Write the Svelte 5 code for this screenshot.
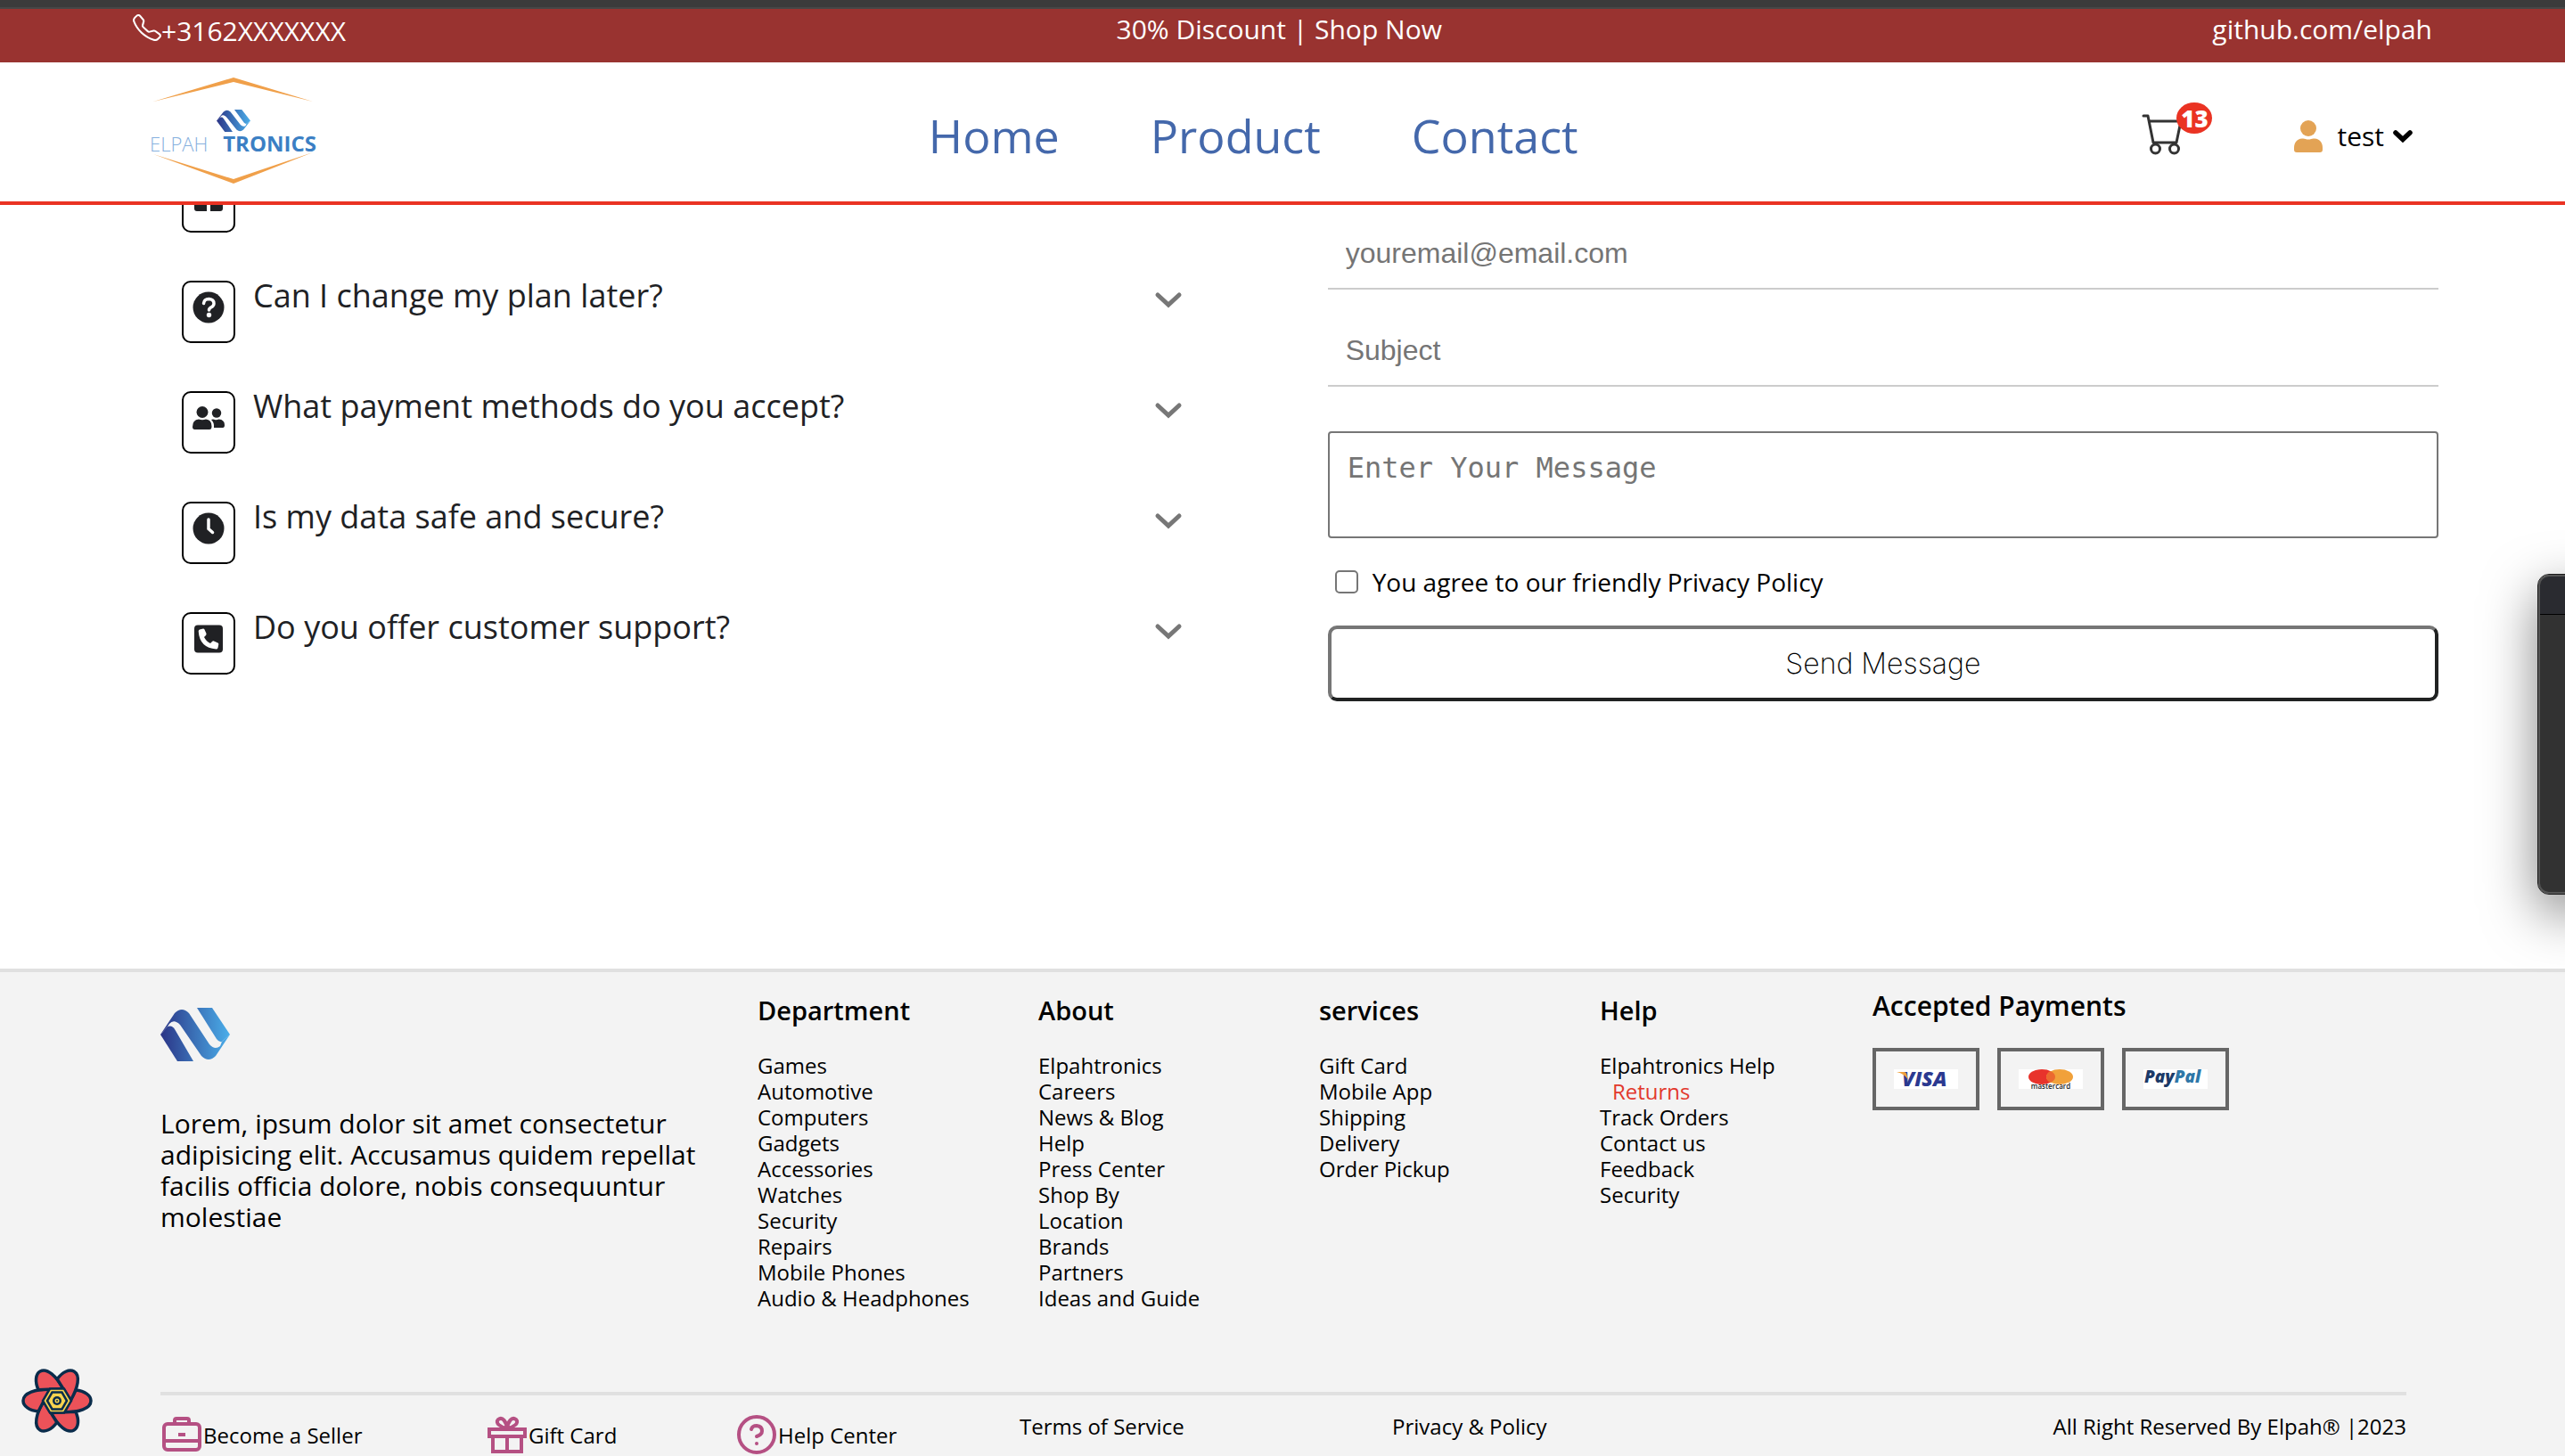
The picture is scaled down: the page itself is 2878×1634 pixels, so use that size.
<script lang="ts">
  const navLinks = ['Home', 'Product', 'Contact'];

  const faqs = [
    { icon: 'gift', question: '' },
    { icon: 'question', question: 'Can I change my plan later?' },
    { icon: 'users', question: 'What payment methods do you accept?' },
    { icon: 'clock', question: 'Is my data safe and secure?' },
    { icon: 'phone', question: 'Do you offer customer support?' },
  ];

  const columns = [
    {
      title: 'Department',
      links: ['Games', 'Automotive', 'Computers', 'Gadgets', 'Accessories', 'Watches', 'Security', 'Repairs', 'Mobile Phones', 'Audio & Headphones'],
    },
    {
      title: 'About',
      links: ['Elpahtronics', 'Careers', 'News & Blog', 'Help', 'Press Center', 'Shop By', 'Location', 'Brands', 'Partners', 'Ideas and Guide'],
    },
    { title: 'services', links: ['Gift Card', 'Mobile App', 'Shipping', 'Delivery', 'Order Pickup'] },
    { title: 'Help', links: ['Elpahtronics Help', 'Returns', 'Track Orders', 'Contact us', 'Feedback', 'Security'] },
  ];

  const petals = [0, 60, 120, 180, 240, 300];
</script>

{#snippet mark(id: string)}
  <defs>
    <linearGradient id={id} x1="0" y1="0" x2="78" y2="0" gradientUnits="userSpaceOnUse">
      <stop offset="0" stop-color="#2b3486" />
      <stop offset="0.5" stop-color="#3b72b8" />
      <stop offset="1" stop-color="#4aaeea" />
    </linearGradient>
  </defs>
  <g fill="url(#{id})">
    <path d="M8 21L0 30L19 60H37L16 24Q13 19 8 21Z" />
    <path d="M0 30L16 6Q24-2 32 6L55 41Q61 48 67 43L69 38L78 30L62 54Q54 62 46 54L22 19Q15 12 10 18L8 21Z" />
    <path d="M41 0H58L78 30L69 38Q66 39 63 35Z" />
  </g>
{/snippet}

<div class="page">
  <div class="window-edge"></div>

  <div class="topbar">
    <a class="phone" href="tel:+3162">
      <svg width="32" height="30" viewBox="0 0 16 16" preserveAspectRatio="none" fill="currentColor" aria-hidden="true">
        <path d="M3.654 1.328a.678.678 0 0 0-1.015-.063L1.605 2.3c-.483.484-.661 1.169-.45 1.77a17.568 17.568 0 0 0 4.168 6.608 17.569 17.569 0 0 0 6.608 4.168c.601.211 1.286.033 1.77-.45l1.034-1.034a.678.678 0 0 0-.063-1.015l-2.307-1.794a.678.678 0 0 0-.58-.122l-2.19.547a1.745 1.745 0 0 1-1.657-.459L5.482 8.062a1.745 1.745 0 0 1-.46-1.657l.548-2.19a.678.678 0 0 0-.122-.58L3.654 1.328zM1.884.511a1.745 1.745 0 0 1 2.612.163L6.29 2.98c.329.423.445.974.315 1.494l-.547 2.19a.678.678 0 0 0 .178.643l2.457 2.457a.678.678 0 0 0 .644.178l2.189-.547a1.745 1.745 0 0 1 1.494.315l2.306 1.794c.829.645.905 1.87.163 2.611l-1.034 1.034c-.74.74-1.846 1.065-2.877.702a18.634 18.634 0 0 1-7.01-4.42 18.634 18.634 0 0 1-4.42-7.009c-.362-1.03-.037-2.137.703-2.877L1.885.511z" />
      </svg>
      <span>+3162XXXXXXX</span>
    </a>
    <span>30% Discount | Shop Now</span>
    <a href="https://github.com/elpah">github.com/elpah</a>
  </div>

  <header>
    <a class="brand" href="#home" aria-label="Elpah Tronics">
      <svg width="190" height="120" viewBox="0 0 190 120" aria-hidden="true">
        <path d="M4 27L94 0L183 27L94 5Z" fill="#f0a04a" />
        <path d="M4 86L94 119L183 84L94 114Z" fill="#f0a04a" />
        <svg x="75" y="36" width="38" height="25" viewBox="0 0 78 60" preserveAspectRatio="none">{@render mark('mark-small')}</svg>
        <text class="brand-light" x="0" y="83">ELPAH</text>
        <text class="brand-bold" x="187" y="83" text-anchor="end">TRONICS</text>
      </svg>
    </a>

    <nav>
      {#each navLinks as link}
        <a href="#{link.toLowerCase()}">{link}</a>
      {/each}
    </nav>

    <div class="actions">
      <a class="cart" href="#cart" aria-label="Cart, 13 items">
        <svg width="44" height="46" viewBox="0 0 44 46" fill="none" stroke="#333" stroke-width="3" stroke-linecap="round" stroke-linejoin="round" aria-hidden="true">
          <path d="M1 2H6L12 32H38L43 8H8" />
          <circle cx="14.500" cy="39" r="5" />
          <circle cx="35.500" cy="39" r="5" />
        </svg>
        <span class="badge">13</span>
      </a>
      <button class="user" type="button">
        <svg width="32" height="36" viewBox="0 0 32 36" fill="#e3a355" aria-hidden="true">
          <circle cx="16" cy="9" r="9" />
          <path d="M9 20.500C12 20 13 21.500 16 21.500S20 20 23 20.500C29 21 32 25 32 31V33Q32 36 29 36H3Q0 36 0 33V31C0 25 3 21 9 20.500Z" />
        </svg>
        <span>test</span>
        <svg width="22" height="15" viewBox="0 0 22 15" fill="none" stroke="#000" stroke-width="5.500" stroke-linecap="round" aria-hidden="true">
          <path d="M3 3L11 10.500L19 3" />
        </svg>
      </button>
    </div>
  </header>

  <main>
    <section class="faq">
      {#each faqs as faq}
        <button class="faq-row" type="button" aria-label={faq.question || 'Question'}>
          <span class="faq-icon">
            <svg width="36" height="36" viewBox="0 0 36 36" fill="#202124" aria-hidden="true">
              {#if faq.icon === 'gift'}
                <path d="M2 20H16V34H5Q2 34 2 31ZM20 20H34V31Q34 34 31 34H20Z" />
              {:else if faq.icon === 'question'}
                <circle cx="18" cy="18" r="17.500" />
                <path d="M12.500 13.500Q13 8.500 18.500 8.500Q24 9 24 13.500Q24 16 21.500 17.500Q18.500 19 18.500 21" fill="none" stroke="#fff" stroke-width="3.500" stroke-linecap="round" />
                <circle cx="18.500" cy="26.500" r="2.700" fill="#fff" />
              {:else if faq.icon === 'users'}
                <circle cx="11" cy="11.500" r="6.500" />
                <circle cx="27" cy="12.500" r="5.200" />
                <path d="M7 19.500Q11 21 15 19.500Q21.500 20 21.500 27.500Q21.500 31 19 31H2.500Q0 31 0 28Q0 20 7 19.500Z" />
                <path d="M21 20Q23 19 25 20Q27 20.700 29.500 19.500Q36 20 36 26Q36 29 34 29H24Q24.500 23 21 20Z" />
              {:else if faq.icon === 'clock'}
                <circle cx="18" cy="18" r="17.500" />
                <path d="M18 8V18.500L22.500 22.500" fill="none" stroke="#fff" stroke-width="3.500" stroke-linecap="round" />
              {:else}
                <rect x="2" y="2.500" width="32" height="31" rx="4" />
                <path d="M8 7.500L12 6.500Q13 6.500 13.500 7.500L15.500 12Q15.700 13 15 14L13 16Q15.500 21 20 23L22 21Q23 20 24 20.500L28.500 22.500Q29.500 23 29.300 24L28.500 28Q28 29.500 26.500 29.500Q8 28 6.700 9.500Q6.700 8 8 7.500Z" fill="#fff" />
              {/if}
            </svg>
          </span>
          <span class="faq-text">{faq.question}</span>
          {#if faq.question}
            <svg width="30" height="44" viewBox="0 0 30 44" fill="none" stroke="#777" stroke-width="5" stroke-linecap="round" aria-hidden="true">
              <path d="M3 16L15 27L27 16" />
            </svg>
          {/if}
        </button>
      {/each}
    </section>

    <form onsubmit={(event) => event.preventDefault()}>
      <input type="email" placeholder="youremail@email.com" aria-label="Email" />
      <input type="text" placeholder="Subject" aria-label="Subject" />
      <textarea placeholder="Enter Your Message" aria-label="Message"></textarea>
      <div class="agree">
        <input type="checkbox" id="agree" />
        <label for="agree">You agree to our friendly Privacy Policy</label>
      </div>
      <button class="send" type="submit">Send Message</button>
    </form>
  </main>

  <footer>
    <div class="footer-grid">
      <div class="about">
        <svg width="78" height="60" viewBox="0 0 78 60" aria-hidden="true">{@render mark('mark-large')}</svg>
        <p>Lorem, ipsum dolor sit amet consectetur adipisicing elit. Accusamus quidem repellat facilis officia dolore, nobis consequuntur molestiae</p>
      </div>
      {#each columns as column}
        <div class="column">
          <h2>{column.title}</h2>
          <ul>
            {#each column.links as link}
              <li><a class:active={link === 'Returns'} href="#footer">{link}</a></li>
            {/each}
          </ul>
        </div>
      {/each}
      <div class="payments">
        <h2>Accepted Payments</h2>
        <div class="cards">
          <span class="card">
            <svg width="72" height="22" viewBox="0 0 72 22" role="img" aria-label="Visa">
              <rect width="72" height="22" fill="#fff" />
              <text class="pay visa" x="9" y="19">VISA</text>
              <path d="M3 3H11Q14 3 14.500 6L16 12Q12 5 3 3Z" fill="#f0a13c" />
            </svg>
          </span>
          <span class="card">
            <svg width="72" height="22" viewBox="0 0 72 22" role="img" aria-label="Mastercard">
              <rect width="72" height="22" fill="#fff" />
              <ellipse cx="26" cy="8.500" rx="15" ry="8.500" fill="#e8332b" />
              <ellipse cx="46" cy="8.500" rx="15" ry="8.500" fill="#f1a13a" />
              <path d="M36 2.200Q41 4.500 41 8.500T36 14.800Q31 12.500 31 8.500T36 2.200Z" fill="#ec692f" />
              <text class="pay master" x="36" y="22" text-anchor="middle">mastercard</text>
            </svg>
          </span>
          <span class="card">
            <svg width="72" height="22" viewBox="0 0 72 22" role="img" aria-label="PayPal">
              <rect width="72" height="22" fill="#fff" />
              <text class="pay" x="1" y="15"><tspan fill="#1d3a68">Pay</tspan><tspan fill="#2f77a8">Pal</tspan></text>
            </svg>
          </span>
        </div>
      </div>
    </div>

    <div class="bottom">
      <a class="with-icon seller" href="#seller">
        <svg width="48" height="44" viewBox="0 0 48 44" fill="none" stroke="#b55083" stroke-width="4" aria-hidden="true">
          <rect x="4" y="10" width="40" height="29" rx="4" />
          <path d="M16 9V6Q16 4 18 4H30Q32 4 32 6V9M4 29H44" />
          <rect x="20" y="20" width="8" height="4" fill="#b55083" stroke="none" />
        </svg>
        <span>Become a Seller</span>
      </a>
      <a class="with-icon gift" href="#gift">
        <svg width="48" height="44" viewBox="0 0 48 44" fill="none" stroke="#b55083" stroke-width="4" aria-hidden="true">
          <rect x="4" y="16" width="40" height="8" />
          <path d="M8 24V41H40V24M24 24V41" />
          <path d="M24 15C17 14 10 9 14 5C19 1 23 8 24 15C25 8 29 1 34 5C38 9 31 14 24 15Z" />
        </svg>
        <span>Gift Card</span>
      </a>
      <a class="with-icon help" href="#help">
        <svg width="48" height="44" viewBox="0 0 48 44" fill="none" stroke="#b55083" stroke-width="4" stroke-linecap="round" aria-hidden="true">
          <circle cx="24" cy="22" r="20" />
          <path d="M18 16Q19 12 24 12Q30 12.500 30 18Q30 22 24 24" />
          <circle cx="24" cy="32" r="2" fill="#b55083" stroke="none" />
        </svg>
        <span>Help Center</span>
      </a>
      <a class="terms" href="#terms">Terms of Service</a>
      <a class="privacy" href="#privacy">Privacy &amp; Policy</a>
      <span class="rights">All Right Reserved By Elpah® |2023</span>
    </div>
  </footer>

  <button class="devtools" type="button" aria-label="Open query devtools">
    <svg width="80" height="72" viewBox="-40 -36 80 72" aria-hidden="true">
      <g fill="#ec5259" stroke="#0a2c4b" stroke-width="3.500" stroke-linejoin="round">
        {#each petals as angle}
          <path transform="rotate({angle})" d="M8 13L21-12C31-11 38-6 38 0C38 9 24 13 8 13Z" />
        {/each}
      </g>
      <path d="M-8-13.500H8L16 0L8 13.500H-8L-16 0Z" fill="#f8d44f" stroke="#0a2c4b" stroke-width="2.500" />
      <path d="M-5.500-9.500H5.500L11 0L5.500 9.500H-5.500L-11 0Z" fill="#f8d44f" stroke="#0a2c4b" stroke-width="2.500" />
      <ellipse rx="5" ry="5" fill="#0a2c4b" />
      <circle r="2.500" fill="#f8d44f" />
      <circle r="1" fill="#0a2c4b" />
    </svg>
  </button>

  <div class="side-window"></div>
</div>

<style>
  :global(body) {
    background: #fff;
  }

  .page {
    position: relative;
    overflow: hidden;
    height: 100vh;
    color: #000;
    font-family: 'Open Sans', 'Noto Sans', sans-serif;
  }

  a {
    color: inherit;
    text-decoration: none;
  }

  button {
    font-family: inherit;
    background: none;
    border: 0;
    padding: 0;
    color: inherit;
    text-align: left;
  }

  svg {
    display: block;
    flex: none;
    overflow: visible;
  }

  .window-edge {
    height: 8px;
    background: #3b3b3b;
    border-bottom: 2px solid #474747;
  }

  .topbar {
    display: flex;
    justify-content: space-between;
    align-items: flex-start;
    height: 60px;
    box-sizing: border-box;
    padding: 4px 149px 0;
    background: #993330;
    color: #fff;
    font-size: 30px;
    line-height: 38px;
  }

  .phone {
    display: flex;
    line-height: 42px;
  }

  .phone svg {
    margin-top: 2px;
  }

  header {
    display: flex;
    justify-content: space-between;
    align-items: center;
    height: 156px;
    padding: 0 171px 0 168px;
    border-bottom: 4px solid #ea3323;
  }

  .brand {
    width: 240px;
    padding-bottom: 2px;
  }

  .brand-light {
    font-size: 22px;
    font-weight: 300;
    fill: #86b0de;
  }

  .brand-bold {
    font-size: 24px;
    font-weight: 700;
    fill: #3b7fc4;
  }

  nav {
    display: flex;
    gap: 102px;
    padding-top: 8px;
    font-size: 52px;
    line-height: 60px;
    color: #4468ab;
  }

  .actions {
    display: flex;
    align-items: center;
    gap: 126px;
    padding-top: 10px;
  }

  .cart {
    position: relative;
    margin-bottom: 4px;
  }

  .badge {
    position: absolute;
    left: 38px;
    top: -13px;
    width: 40px;
    height: 35px;
    border-radius: 50%;
    background: #ea3323;
    color: #fff;
    font-size: 26px;
    font-weight: 800;
    line-height: 36px;
    text-align: center;
  }

  .user {
    display: flex;
    align-items: center;
    gap: 10px;
    font-size: 30px;
    line-height: 38px;
  }

  .user span {
    padding-left: 6px;
  }

  main {
    display: grid;
    grid-template-columns: 9fr 10fr;
    gap: 164px;
    overflow: hidden;
    padding: 0 142px 300px 204px;
  }

  .faq {
    display: flex;
    flex-direction: column;
    gap: 54px;
    margin-top: -39px;
  }

  .faq-row {
    display: flex;
    align-items: flex-start;
    height: 70px;
    color: #202124;
  }

  .faq-icon {
    box-sizing: border-box;
    width: 60px;
    height: 70px;
    padding: 10px;
    border: 2px solid #000;
    border-radius: 10px;
  }

  .faq-text {
    flex: 1;
    padding-left: 20px;
    font-size: 36px;
    line-height: 34px;
  }

  form {
    display: flex;
    flex-direction: column;
    padding-top: 16px;
  }

  input[type='email'],
  input[type='text'] {
    box-sizing: border-box;
    height: 79px;
    margin: 0 0 30px;
    padding: 20px;
    border: 0;
    border-bottom: 2px solid #ccc;
    outline: 0;
    font-family: 'Liberation Sans', Arial, sans-serif;
    font-size: 32px;
    line-height: 37px;
  }

  input::placeholder,
  textarea::placeholder {
    color: #757575;
  }

  textarea {
    box-sizing: border-box;
    height: 120px;
    margin-top: 20px;
    padding: 20px;
    border: 2px solid #767676;
    border-radius: 4px;
    font-family: 'DejaVu Sans Mono', monospace;
    font-size: 32px;
    line-height: 38px;
    resize: none;
  }

  .agree {
    display: flex;
    align-items: center;
    gap: 16px;
    padding: 33px 0 33px 8px;
    font-size: 28px;
    line-height: 32px;
  }

  .agree input {
    appearance: none;
    width: 26px;
    height: 26px;
    margin: 0;
    border: 2px solid #767676;
    border-radius: 5px;
    background: #fff;
  }

  .send {
    height: 85px;
    border: 4px solid;
    border-color: #767676 #202222 #202222 #767676;
    border-radius: 10px;
    font-family: Inter, 'Open Sans', sans-serif;
    font-size: 32px;
    font-weight: 200;
    text-align: center;
  }

  footer {
    padding: 0 178px 0 180px;
    border-top: 4px solid #e0e0e0;
    background: #f3f3f3;
  }

  .footer-grid {
    display: grid;
    grid-template-columns: 670fr 315fr 315fr 315fr 306fr 599fr;
    padding-bottom: 91px;
  }

  .about {
    padding-top: 40px;
  }

  .about p {
    max-width: 620px;
    margin: 52px 0 0;
    font-size: 30px;
    line-height: 35px;
  }

  h2 {
    margin: 0 0 28px;
    font-size: 30px;
    font-weight: 600;
    line-height: 38px;
  }

  .column {
    padding-top: 24px;
  }

  .column h2 {
    font-size: 29px;
  }

  ul {
    margin: 0;
    padding: 0;
    list-style: none;
    font-size: 24px;
    line-height: 29px;
    white-space: nowrap;
  }

  .active {
    padding-left: 14px;
    color: #e2382c;
  }

  .payments {
    padding-top: 19px;
  }

  .cards {
    display: flex;
    gap: 20px;
  }

  .card {
    height: 22px;
    padding: 20px;
    border: 4px solid #666;
  }

  .pay {
    font-size: 19px;
    font-weight: 800;
    font-style: italic;
  }

  .visa {
    font-size: 23px;
    fill: #2b3990;
  }

  .master {
    font-size: 8px;
    font-style: normal;
    font-weight: 600;
    fill: #222;
  }

  .bottom {
    display: flex;
    align-items: flex-start;
    padding: 20px 0 4px;
    border-top: 4px solid #e0e0e0;
    font-size: 24px;
    line-height: 29px;
    white-space: nowrap;
  }

  .with-icon {
    display: flex;
    align-items: center;
    padding-top: 2px;
  }

  .seller {
    width: 365px;
  }

  .gift {
    width: 280px;
  }

  .help {
    width: 319px;
  }

  .terms {
    width: 418px;
  }

  .rights {
    margin-left: auto;
  }

  .devtools {
    position: absolute;
    left: 24px;
    bottom: 26px;
  }

  .side-window {
    position: absolute;
    top: 645px;
    right: -40px;
    width: 66px;
    height: 354px;
    border: 2px solid #555;
    border-radius: 12px;
    outline: 1px solid #1a1a1a;
    background: linear-gradient(#2a2b30 42px, #000 42px, #000 43px, #323232 43px);
    box-shadow: 0 20px 60px rgba(0, 0, 0, 0.5);
  }
</style>
